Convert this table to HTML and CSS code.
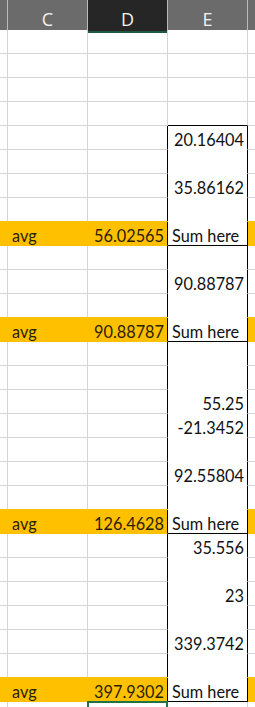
FILE: index.html
```html
<!DOCTYPE html>
<html>
<head>
<meta charset="utf-8">
<link rel="stylesheet" href="styles.css">
</head>
<body>
<div class="sheet">
  <div class="hdr">
    <div class="h hb"></div>
    <div class="h">C</div>
    <div class="h sel">D</div>
    <div class="h">E</div>
    <div class="h hf"></div>
  </div>
  <div class="row"><div class="c b"></div><div class="c"></div><div class="c"></div><div class="c e"></div><div class="c f"></div></div>
  <div class="row"><div class="c b"></div><div class="c"></div><div class="c"></div><div class="c e"></div><div class="c f"></div></div>
  <div class="row"><div class="c b"></div><div class="c"></div><div class="c"></div><div class="c e"></div><div class="c f"></div></div>
  <div class="row top"><div class="c b"></div><div class="c"></div><div class="c"></div><div class="c e"></div><div class="c f"></div></div>
  <div class="row in"><div class="c b"></div><div class="c"></div><div class="c"></div><div class="c e num">20.16404</div><div class="c f"></div></div>
  <div class="row in"><div class="c b"></div><div class="c"></div><div class="c"></div><div class="c e"></div><div class="c f"></div></div>
  <div class="row in"><div class="c b"></div><div class="c"></div><div class="c"></div><div class="c e num">35.86162</div><div class="c f"></div></div>
  <div class="row in"><div class="c b"></div><div class="c"></div><div class="c"></div><div class="c e"></div><div class="c f"></div></div>
  <div class="row in sum"><div class="c b"></div><div class="c txt">avg</div><div class="c num">56.02565</div><div class="c e txt">Sum here</div><div class="c f"></div></div>
  <div class="row in"><div class="c b"></div><div class="c"></div><div class="c"></div><div class="c e"></div><div class="c f"></div></div>
  <div class="row in"><div class="c b"></div><div class="c"></div><div class="c"></div><div class="c e num">90.88787</div><div class="c f"></div></div>
  <div class="row in"><div class="c b"></div><div class="c"></div><div class="c"></div><div class="c e"></div><div class="c f"></div></div>
  <div class="row in sum"><div class="c b"></div><div class="c txt">avg</div><div class="c num">90.88787</div><div class="c e txt">Sum here</div><div class="c f"></div></div>
  <div class="row in"><div class="c b"></div><div class="c"></div><div class="c"></div><div class="c e"></div><div class="c f"></div></div>
  <div class="row in"><div class="c b"></div><div class="c"></div><div class="c"></div><div class="c e"></div><div class="c f"></div></div>
  <div class="row in"><div class="c b"></div><div class="c"></div><div class="c"></div><div class="c e num">55.25</div><div class="c f"></div></div>
  <div class="row in"><div class="c b"></div><div class="c"></div><div class="c"></div><div class="c e num">-21.3452</div><div class="c f"></div></div>
  <div class="row in"><div class="c b"></div><div class="c"></div><div class="c"></div><div class="c e"></div><div class="c f"></div></div>
  <div class="row in"><div class="c b"></div><div class="c"></div><div class="c"></div><div class="c e num">92.55804</div><div class="c f"></div></div>
  <div class="row in"><div class="c b"></div><div class="c"></div><div class="c"></div><div class="c e"></div><div class="c f"></div></div>
  <div class="row in sum"><div class="c b"></div><div class="c txt">avg</div><div class="c num">126.4628</div><div class="c e txt">Sum here</div><div class="c f"></div></div>
  <div class="row in"><div class="c b"></div><div class="c"></div><div class="c"></div><div class="c e num">35.556</div><div class="c f"></div></div>
  <div class="row in"><div class="c b"></div><div class="c"></div><div class="c"></div><div class="c e"></div><div class="c f"></div></div>
  <div class="row in"><div class="c b"></div><div class="c"></div><div class="c"></div><div class="c e num">23</div><div class="c f"></div></div>
  <div class="row in"><div class="c b"></div><div class="c"></div><div class="c"></div><div class="c e"></div><div class="c f"></div></div>
  <div class="row in"><div class="c b"></div><div class="c"></div><div class="c"></div><div class="c e num">339.3742</div><div class="c f"></div></div>
  <div class="row in"><div class="c b"></div><div class="c"></div><div class="c"></div><div class="c e"></div><div class="c f"></div></div>
  <div class="row in sum"><div class="c b"></div><div class="c txt">avg</div><div class="c num">397.9302</div><div class="c e txt">Sum here</div><div class="c f"></div></div>
  <div class="row"><div class="c b"></div><div class="c"></div><div class="c active"></div><div class="c e"></div><div class="c f"></div></div>
</div>
</body>
</html>
```

FILE: styles.css
```css
html, body {
  margin: 0;
  padding: 0;
  background: #ffffff;
  overflow: hidden;
}

.sheet {
  width: 255px;
  height: 707px;
  overflow: hidden;
}

.hdr {
  display: grid;
  grid-template-columns: 8px 80px 80px 80px 1fr;
  height: 30px;
  background: #6b6b6b;
}

.h {
  box-sizing: border-box;
  border-right: 1px solid #b9b9b9;
  color: #f2f2f2;
  font-family: "Open Sans", "Noto Sans", sans-serif;
  font-size: 18px;
  font-weight: 400;
  line-height: 24px;
  text-align: center;
  padding-top: 7px;
}

.h.hf {
  border-right: 0;
}

.h.sel {
  background: #262626;
  border-bottom: 2px solid #1d5a41;
}

.row {
  display: grid;
  grid-template-columns: 8px 80px 80px 80px 1fr;
  height: 24px;
}

.c {
  box-sizing: border-box;
  height: 24px;
  border-right: 1px solid #d4d4d4;
  border-bottom: 1px solid #d4d4d4;
  font-family: "Lato", "Open Sans", sans-serif;
  font-size: 16.3px;
  color: #111111;
  line-height: 27px;
  white-space: nowrap;
  overflow: hidden;
}

.c.f {
  border-right: 0;
}

.num {
  text-align: right;
  padding-right: 3px;
}

.txt {
  text-align: left;
  padding-left: 4px;
}

/* boxed column E */
.row.top .e {
  border-bottom-color: #000000;
}

.row.in .c:nth-child(3) {
  border-right-color: #000000;
}

.row.in .e {
  border-right-color: #000000;
  border-bottom-color: #ffffff;
}

/* highlighted rows */
.row.sum .c {
  background: #ffc000;
  border-color: #ffc000;
  box-shadow: 0 -1px 0 #ffc000;
  color: #2a1e00;
}

.row.sum .c:nth-child(3) {
  border-right-color: #000000;
}

.row.sum .c.e {
  background: #ffffff;
  border-right-color: #000000;
  border-bottom-color: #000000;
  box-shadow: none;
  color: #111111;
}

/* selected cell */
.c.active {
  border-top: 2px solid #217346;
  border-left: 2px solid #217346;
  border-right: 2px solid #217346;
  margin-left: -1px;
  margin-top: -1px;
}
```
